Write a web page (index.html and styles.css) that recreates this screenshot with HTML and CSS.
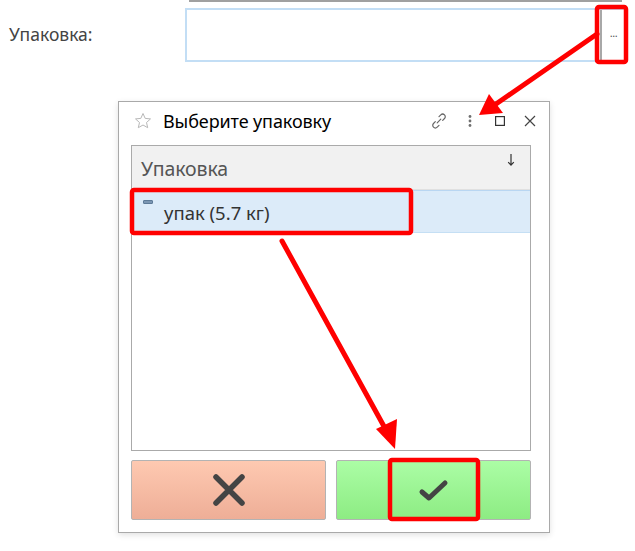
FILE: index.html
```html
<!DOCTYPE html>
<html lang="ru">
<head>
<meta charset="utf-8">
<title>Выберите упаковку</title>
<link rel="stylesheet" href="styles.css">
</head>
<body>
<div class="page">
  <div class="prev-field"></div>
  <div class="form-row">
    <label class="field-label">Упаковка:</label>
    <div class="input">
      <div class="input-value"></div>
      <div class="select-btn">...</div>
    </div>
  </div>

  <div class="dialog">
    <div class="titlebar">
      <svg class="star" width="18" height="18" viewBox="0 0 18 18"><path d="M9 1.5l2.2 4.9 5.3.5-4 3.6 1.2 5.2L9 13l-4.7 2.7 1.2-5.2-4-3.6 5.3-.5z" fill="none" stroke="#b8b8b8" stroke-width="1"/></svg>
      <div class="title">Выберите упаковку</div>
      <div class="tools">
        <svg class="tool" width="18" height="18" viewBox="0 0 18 18"><g fill="none" stroke="#666" stroke-width="1.2" stroke-linecap="round"><path d="M7.2 10.8l3.6-3.6"/><path d="M9 4.6l1.8-1.8a2.6 2.6 0 0 1 3.7 3.7l-1.8 1.8"/><path d="M9 13.4l-1.8 1.8a2.6 2.6 0 0 1-3.7-3.7l1.8-1.8"/></g></svg>
        <svg class="tool" width="16" height="16" viewBox="0 0 16 16"><g fill="#707070"><circle cx="8" cy="3.5" r="1.4"/><circle cx="8" cy="8" r="1.4"/><circle cx="8" cy="12.5" r="1.4"/></g></svg>
        <svg class="tool" width="16" height="16" viewBox="0 0 16 16"><rect x="3.6" y="3.6" width="8.8" height="8.8" fill="none" stroke="#333" stroke-width="1.2"/></svg>
        <svg class="tool" width="16" height="16" viewBox="0 0 16 16"><path d="M3 3l10 10M13 3L3 13" stroke="#444" stroke-width="1.2"/></svg>
      </div>
    </div>
    <div class="table">
      <div class="thead">
        <span class="th">Упаковка</span>
        <svg class="sort" width="8" height="14" viewBox="0 0 8 14"><path d="M4 1v11M1.2 9.2L4 12.2l2.8-3" fill="none" stroke="#333" stroke-width="1.2"/></svg>
      </div>
      <div class="row selected">
        <span class="row-icon"></span>
        <span class="cell">упак (5.7 кг)</span>
      </div>
    </div>
    <div class="buttons">
      <button class="btn cancel" type="button">
        <svg width="40" height="40" viewBox="0 0 40 40"><path d="M7 7l26 26M33 7L7 33" stroke="#444" stroke-width="5.5" stroke-linecap="round"/></svg>
      </button>
      <button class="btn ok" type="button">
        <svg width="40" height="40" viewBox="0 0 40 40"><path d="M8 22l7 6 16-15" fill="none" stroke="#444" stroke-width="5" stroke-linecap="round" stroke-linejoin="round"/></svg>
      </button>
    </div>
  </div>

  <svg class="annotations" width="635" height="551" viewBox="0 0 635 551">
    <g fill="none" stroke="#ff0000" stroke-width="4.5">
      <rect x="597" y="7" width="29" height="55" rx="2"/>
      <rect x="132" y="190" width="279" height="43" rx="2"/>
      <rect x="390" y="460" width="88" height="59" rx="2"/>
    </g>
    <g stroke="#ff0000" stroke-width="5" stroke-linecap="round">
      <line x1="597" y1="34" x2="496" y2="104"/>
      <line x1="282" y1="241" x2="386" y2="430"/>
    </g>
    <g fill="#ff0000">
      <polygon points="479,115 489,94 503,113"/>
      <polygon points="395,449 376,429 397,419"/>
    </g>
  </svg>
</div>
</body>
</html>
```

FILE: styles.css
```css
* { box-sizing: border-box; }

html, body {
  margin: 0;
  padding: 0;
  background: #ffffff;
}

body {
  font-family: "Noto Sans", "Open Sans", Arial, sans-serif;
  color: #333;
}

.page {
  position: relative;
  width: 635px;
  height: 551px;
  overflow: hidden;
}

.prev-field {
  margin-left: 189px;
  width: 433px;
  height: 2px;
  background: #a0a0a0;
}

.form-row {
  display: flex;
  align-items: center;
  margin-top: 6px;
}

.field-label {
  width: 185px;
  padding-left: 9px;
  font-size: 17.5px;
  color: #444;
  line-height: 20px;
  padding-bottom: 2px;
}

.input {
  display: flex;
  width: 440px;
  height: 54px;
  border: 2px solid #c3def5;
  border-right: none;
}

.input-value {
  flex: 1;
}

.select-btn {
  width: 25px;
  border-left: 2px solid #a8a8a8;
  font-size: 11px;
  color: #555;
  display: flex;
  align-items: center;
  justify-content: center;
  padding-bottom: 6px;
  letter-spacing: -0.5px;
}

.dialog {
  position: absolute;
  left: 118px;
  top: 101px;
  width: 432px;
  height: 432px;
  border: 1px solid #a9a9a9;
  background: #fff;
  box-shadow: 0 2px 6px rgba(0, 0, 0, 0.12);
  padding: 0 19px 12px 12px;
  display: flex;
  flex-direction: column;
}

.titlebar {
  height: 43px;
  display: flex;
  align-items: center;
  padding-left: 3px;
  padding-bottom: 4px;
}

.star {
  margin-right: 11px;
}

.title {
  font-size: 18px;
  color: #000;
  flex: 1;
  letter-spacing: -0.1px;
}

.tools {
  display: flex;
  align-items: center;
  gap: 14px;
  margin-right: -8px;
}

.table {
  height: 307px;
  width: 400px;
  border: 1px solid #aaaaaa;
  display: flex;
  flex-direction: column;
}

.thead {
  height: 44px;
  background: #f1f1f1;
  border-bottom: 1px solid #e0e0e0;
  display: flex;
  align-items: center;
  padding: 0 15px 0 9px;
}

.th {
  flex: 1;
  font-size: 19.5px;
  color: #555;
  padding-top: 2px;
  letter-spacing: -0.1px;
}

.sort {
  align-self: flex-start;
  margin-top: 7px;
}

.row {
  height: 43px;
  display: flex;
  align-items: center;
  padding-left: 11px;
}

.row.selected {
  background: #dcebf9;
  border-top: 1px solid #b9d6f2;
  border-bottom: 1px solid #c5dff4;
}

.row-icon {
  width: 10px;
  height: 4px;
  background: #7b96b3;
  border: 1px solid #5d7a98;
  border-radius: 1px;
  align-self: flex-start;
  margin-top: 9px;
  margin-right: 11px;
}

.cell {
  font-size: 18.5px;
  color: #333;
  padding-top: 3px;
}

.buttons {
  margin-top: 9px;
  display: flex;
  gap: 10px;
  width: 400px;
}

.btn {
  flex: 1;
  height: 60px;
  border: 1px solid #b3b3b3;
  border-radius: 2px;
  display: flex;
  align-items: center;
  justify-content: center;
  padding: 0;
  cursor: pointer;
}

.btn.cancel {
  background: linear-gradient(#fec9b1, #eeae97);
}

.btn.ok {
  background: linear-gradient(#abfda5, #8dec83);
}

.annotations {
  position: absolute;
  left: 0;
  top: 0;
  pointer-events: none;
}
```
